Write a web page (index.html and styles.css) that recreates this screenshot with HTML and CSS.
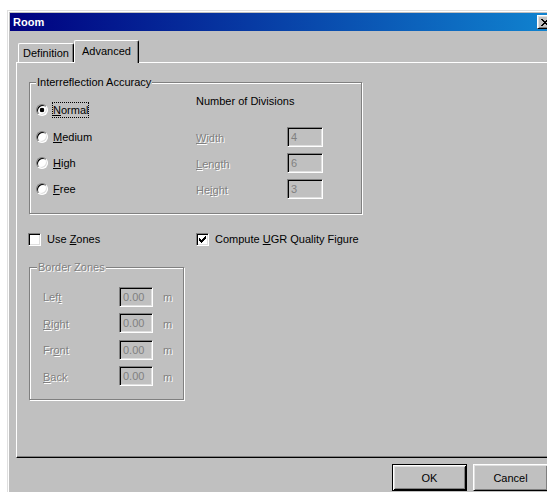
FILE: index.html
```html
<!DOCTYPE html>
<html>
<head>
<meta charset="utf-8">
<title>Room</title>
<link rel="stylesheet" href="styles.css">
</head>
<body>
<div class="window">
  <div class="titlebar">
    <span class="title">Room</span>
    <span class="caption-btn">
      <svg viewBox="0 0 8 7" width="8" height="7" shape-rendering="crispEdges">
        <path fill="#000" d="M0 0h2v1H0z M6 0h2v1H6z M1 1h2v1H1z M5 1h2v1H5z M2 2h4v1H2z M3 3h2v1H3z M2 4h4v1H2z M1 5h2v1H1z M5 5h2v1H5z M0 6h2v1H0z M6 6h2v1H6z"/>
      </svg>
    </span>
  </div>

  <div class="client">
    <div class="tabs">
      <div class="tab">Definition</div>
      <div class="tab active">Advanced</div>
    </div>

    <div class="page">
      <div class="group accuracy">
        <span class="group-title">Interreflection Accuracy</span>
        <div class="acc-grid">
          <label class="opt"><span class="radio checked"></span><span class="focus"><u>N</u>ormal</span></label>
          <div class="div-title">Number of Divisions</div>

          <label class="opt"><span class="radio"></span><span><u>M</u>edium</span></label>
          <span class="dis lbl"><u>W</u>idth</span>
          <span class="edit">4</span>

          <label class="opt"><span class="radio"></span><span><u>H</u>igh</span></label>
          <span class="dis lbl"><u>L</u>ength</span>
          <span class="edit">6</span>

          <label class="opt"><span class="radio"></span><span><u>F</u>ree</span></label>
          <span class="dis lbl">He<u>i</u>ght</span>
          <span class="edit">3</span>
        </div>
      </div>

      <div class="checks">
        <label class="check first"><span class="box"></span><span>Use <u>Z</u>ones</span></label>
        <label class="check"><span class="box">
          <svg viewBox="0 0 7 7" width="7" height="7" shape-rendering="crispEdges">
            <path fill="#000" d="M6 0h1v3H6z M5 1h1v3H5z M4 2h1v3H4z M3 3h1v3H3z M2 4h1v3H2z M1 3h1v3H1z M0 2h1v3H0z"/>
          </svg>
        </span><span>Compute <u>U</u>GR Quality Figure</span></label>
      </div>

      <div class="group zones">
        <span class="group-title dis">Border Zones</span>
        <div class="zone-grid">
          <span class="dis lbl">Lef<u>t</u></span><span class="edit">0.00</span><span class="dis unit">m</span>
          <span class="dis lbl"><u>R</u>ight</span><span class="edit">0.00</span><span class="dis unit">m</span>
          <span class="dis lbl">Fr<u>o</u>nt</span><span class="edit">0.00</span><span class="dis unit">m</span>
          <span class="dis lbl"><u>B</u>ack</span><span class="edit">0.00</span><span class="dis unit">m</span>
        </div>
      </div>
    </div>

    <div class="buttons">
      <button class="btn default">OK</button>
      <button class="btn">Cancel</button>
    </div>
  </div>
</div>
</body>
</html>
```

FILE: styles.css
```css
* { box-sizing: border-box; }

html {
  margin: 0;
  width: 547px;
  height: 492px;
  overflow: hidden;
}

body {
  margin: 0;
  padding: 10px 0 0 7px;
  width: 547px;
  height: 492px;
  overflow: hidden;
  background: #fff;
  font: 11px "Liberation Sans", Arial, sans-serif;
  color: #000;
}

u { text-decoration: underline; text-underline-offset: 1px; }

/* window frame */
.window {
  width: 551px;
  height: 500px;
  padding: 2px;
  background: #c0c0c0;
  border: 1px solid;
  border-color: #dfdfdf #000 #000 #dfdfdf;
  box-shadow: inset 1px 1px #fff, inset -1px -1px #808080;
}

.titlebar {
  display: flex;
  align-items: center;
  height: 18px;
  padding-left: 3px;
  background: linear-gradient(to right, #000080, #1084d0);
  color: #fff;
  font-weight: bold;
}

.caption-btn {
  margin-left: auto;
  margin-right: 2px;
  width: 16px;
  height: 14px;
  display: flex;
  align-items: center;
  justify-content: center;
  background: #c0c0c0;
  border: 1px solid;
  border-color: #fff #000 #000 #fff;
  box-shadow: inset 1px 1px #dfdfdf, inset -1px -1px #808080;
}
.caption-btn svg { display: block; }

.client { padding: 9px 6px 0; }

/* tab strip */
.tabs {
  position: relative;
  z-index: 1;
  display: flex;
  align-items: flex-start;
  height: 22px;
  padding-left: 2px;
}

.tab {
  margin-top: 3px;
  width: 56px;
  height: 19px;
  line-height: 18px;
  text-align: center;
  background: #c0c0c0;
  border-top: 1px solid #fff;
  border-left: 1px solid #fff;
  border-right: 1px solid #000;
  border-radius: 2px 2px 0 0;
  box-shadow: inset -1px 0 #808080;
}

.tab.active {
  margin-top: 0;
  width: 65px;
  height: 23px;
  line-height: 20px;
}

.page {
  height: 396px;
  padding: 19px 0 0 12px;
  border: 1px solid;
  border-color: #fff #000 #000 #fff;
  box-shadow: inset -1px -1px #808080;
}

/* etched group boxes */
.group {
  position: relative;
  border: 1px solid #808080;
  box-shadow: inset 1px 1px #fff, 1px 1px #fff;
}

.group-title {
  position: absolute;
  top: -7px;
  left: 6px;
  padding: 0 1px;
  line-height: 13px;
  background: #c0c0c0;
}

.accuracy {
  width: 333px;
  height: 132px;
  padding: 13px 0 0 6px;
}

.acc-grid {
  display: grid;
  grid-template-columns: 160px 91px 36px;
  grid-template-rows: 28px 26px 26px 26px;
  align-items: center;
}

.div-title {
  grid-column: 2 / 4;
  align-self: start;
  margin-top: -1px;
  line-height: 13px;
}

.opt {
  display: flex;
  align-items: center;
  gap: 5px;
  line-height: 13px;
}

.focus {
  margin-left: -1px;
  border: 1px dotted #000;
  line-height: 14px;
}

.radio {
  width: 12px;
  height: 12px;
  flex: none;
  border-radius: 50%;
  border: 1px solid;
  border-color: #808080 #fff #fff #808080;
  box-shadow: inset 1px 1px #000, inset -1px -1px #dfdfdf;
  background: #fff;
}
.radio.checked {
  background: radial-gradient(circle, #000 2px, #fff 2.6px);
}

.dis {
  color: #808080;
  text-shadow: 1px 1px 0 #fff;
}
.lbl { padding-top: 2px; line-height: 13px; }

.edit {
  height: 20px;
  padding-left: 3px;
  line-height: 18px;
  color: #808080;
  border: 1px solid;
  border-color: #808080 #fff #fff #808080;
  box-shadow: inset 1px 1px #000, inset -1px -1px #dfdfdf;
}

/* check boxes */
.checks {
  display: flex;
  margin: 19px 0 0 -1px;
  height: 13px;
  line-height: 13px;
}

.check {
  display: flex;
  align-items: center;
  gap: 6px;
}
.check.first { width: 168px; }

.box {
  width: 13px;
  height: 13px;
  flex: none;
  display: flex;
  align-items: center;
  justify-content: center;
  background: #fff;
  border: 1px solid;
  border-color: #808080 #fff #fff #808080;
  box-shadow: inset 1px 1px #000, inset -1px -1px #dfdfdf;
}
.box svg { display: block; }

.zones {
  margin-top: 21px;
  width: 155px;
  height: 133px;
  padding: 15px 0 0 13px;
}
.zones .group-title { left: 7px; }

.zone-grid {
  display: grid;
  grid-template-columns: 76px 34px auto;
  grid-template-rows: 27px 26px 27px 26px;
  align-items: center;
}

.unit { padding: 2px 0 0 10px; line-height: 13px; }

/* dialog buttons */
.buttons {
  display: flex;
  justify-content: flex-end;
  gap: 6px;
  margin-top: 6px;
  padding-right: 1px;
}

.btn {
  width: 75px;
  height: 27px;
  padding: 0;
  font: 11px "Liberation Sans", Arial, sans-serif;
  color: #000;
  background: #c0c0c0;
  border: 1px solid;
  border-color: #fff #000 #000 #fff;
  box-shadow: inset 1px 1px #dfdfdf, inset -1px -1px #808080;
}

.btn.default {
  border-color: #000;
  box-shadow: inset 1px 1px #fff, inset -1px -1px #000, inset 2px 2px #dfdfdf, inset -2px -2px #808080;
}
```
